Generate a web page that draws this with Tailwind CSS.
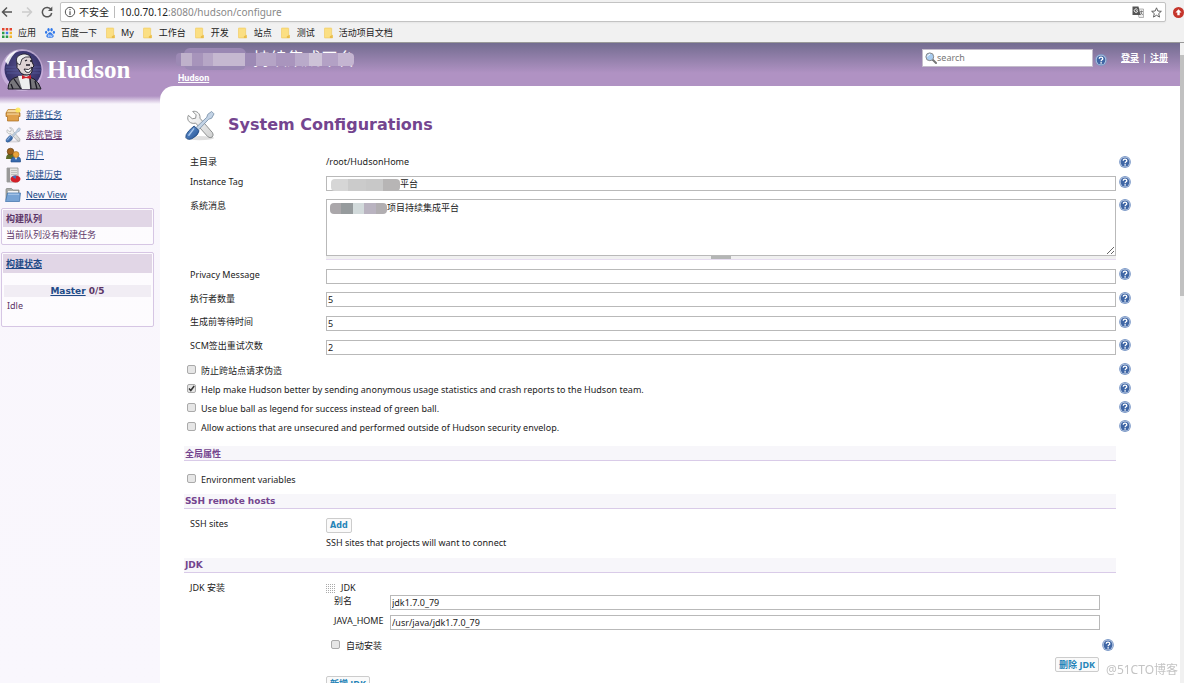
<!DOCTYPE html>
<html lang="en">
<head>
<meta charset="utf-8">
<title>System Configurations [Hudson]</title>
<script src="https://cdn.jsdelivr.net/npm/@tailwindcss/browser@4"></script>
</head>
<body class="flex h-screen flex-col overflow-hidden bg-white font-['Noto_Sans','Noto_Sans_CJK_SC',sans-serif] text-[9px] leading-3 text-[#222]">

<!-- Shared icons -->
<svg class="absolute size-0" aria-hidden="true">
  <defs>
    <radialGradient id="globe" cx="50%" cy="45%" r="60%"><stop offset="0" stop-color="#5a5590"/><stop offset="1" stop-color="#2f2b62"/></radialGradient>
    <linearGradient id="blade" x1="0" y1="0" x2="1" y2="1"><stop offset="0" stop-color="#fff"/><stop offset="1" stop-color="#cfd0d0"/></linearGradient>
    <linearGradient id="grip" x1="0" y1="0" x2="1" y2="1"><stop offset="0" stop-color="#6c9bd4"/><stop offset="1" stop-color="#1f4f94"/></linearGradient>
  </defs>
  <symbol id="help" viewBox="0 0 12 12">
    <circle cx="6" cy="6" r="5.9" fill="#7d9ac8"/><circle cx="6" cy="6" r="5" fill="#dfe7f3"/><circle cx="6" cy="6" r="4.500" fill="#3f66a5"/>
    <path d="M4.2 4.7C4.2 2.6 7.8 2.6 7.8 4.7C7.8 5.9 6.1 5.8 6.1 7.2" fill="none" stroke="#fff" stroke-width="1.3"/><circle cx="6.1" cy="8.9" r=".8" fill="#fff"/>
  </symbol>
  <symbol id="folder" viewBox="0 0 10 12">
    <path d="M.5 1Q.5.5 1 .5H8Q8.500.5 8.500 1V8.500H9.500V11.500H1Q.5 11.500.5 11Z" fill="#fbdf83" stroke="#f0c95c" stroke-width=".7"/><path d="M6.500 11.500V9.500L8.500 8.500H9.500V11.500Z" fill="#e9bd4b"/>
  </symbol>
  <symbol id="tools" viewBox="0 0 32 32">
    <ellipse cx="16" cy="29" rx="15" ry="2.200" fill="#000" opacity=".13"/>
    <path d="M4.500 5.500L8.500 9L12 8.500L12.500 5L9 1.500C13 .5 17 3.500 16.500 8.500L29.500 23.500Q31 26 29 28Q27 29.500 24.500 27.500L12 13.500C7 15 2 11 4.500 5.500Z" fill="url(#blade)" stroke="#8c8e8e"/>
    <path d="M12.500 18L23.500 7.500L24.500 4.500L28.500 1.500L31 4L28.500 8.500L25.500 9.500L15 20.500Z" fill="#c3d3e5" stroke="#7d93ab" stroke-width=".9"/>
    <path d="M10.500 16.500L15.500 21.500Q15 26 8.500 29.500Q4 31.500 2 28.500Q1 26 5 21.500Q8.500 18 10.500 16.500Z" fill="url(#grip)" stroke="#1e477f" stroke-width=".9"/>
    <path d="M10 19.500L5 26" stroke="#a9c7ee" stroke-width="1.500" stroke-linecap="round"/>
  </symbol>
</svg>

<!-- Browser toolbar -->
<div class="flex h-6 shrink-0 items-center bg-[#f1f1f1]">
  <div class="flex w-[60px] shrink-0 items-center gap-2 pl-px">
    <button type="button" aria-label="Back"><svg class="size-3" viewBox="0 0 12 12" fill="none" stroke="#555" stroke-width="1.500"><path d="M11 6H1.500M6 1.500L1.500 6L6 10.500"/></svg></button>
    <button type="button" aria-label="Forward"><svg class="size-3" viewBox="0 0 12 12" fill="none" stroke="#ccc" stroke-width="1.500"><path d="M1 6H10.500M6 1.500L10.500 6L6 10.500"/></svg></button>
    <button type="button" aria-label="Reload"><svg class="size-3" viewBox="0 0 12 12" fill="none" stroke="#555" stroke-width="1.500"><path d="M10 3.500A4.700 4.700 0 1 0 10.700 7"/><path d="M11.300.5V5H7Z" fill="#555" stroke="none"/></svg></button>
  </div>
  <div class="flex h-5 grow items-center rounded-xs border border-[#c3c3c3] bg-white pl-[3px] text-[10px] shadow-xs">
    <svg class="size-3 shrink-0" viewBox="0 0 12 12" fill="none" stroke="#555"><circle cx="6" cy="6" r="4.700"/><path d="M6 5.200V9M6 3V4.300" stroke-width="1.200"/></svg>
    <span class="ml-[3px] shrink-0 text-[#222]">不安全</span>
    <span class="mx-[5px] h-3 w-px bg-[#bbb]"></span>
    <div role="textbox" aria-label="Address" contenteditable="true" class="grow text-[#888] outline-none"><span class="text-[#222]">10.0.70.12</span>:8080/hudson/configure</div>
    <button type="button" aria-label="Translate" class="mr-[7px]"><svg class="size-3" viewBox="0 0 12 12"><path d="M5 3H11.500V11.500H7Z" fill="#eee" stroke="#999" stroke-width=".7"/><path d="M.5.5H6.500L8.500 9H.5Z" fill="#555"/><path d="M5.500 3.500A1.800 1.800 0 1 0 5.500 5.800V4.800H4" fill="none" stroke="#fff" stroke-width=".9"/><path d="M8 5.500H11M9.500 4.500V5.500Q9.500 8 8.300 9M8.800 6.500L10.800 9" stroke="#666" stroke-width=".7" fill="none"/></svg></button>
    <button type="button" aria-label="Bookmark" class="mr-[3px]"><svg class="size-[11px]" viewBox="0 0 12 12" fill="none" stroke="#555"><path d="M6 .9L7.500 4.400L11.300 4.700L8.400 7.200L9.300 11L6 9L2.700 11L3.600 7.200L.7 4.700L4.500 4.400Z"/></svg></button>
  </div>
  <button type="button" aria-label="Extension" class="ml-[7px] w-[11px] shrink-0"><svg class="size-[11px]" viewBox="0 0 12 12"><circle cx="6" cy="6" r="6" fill="#c5352b"/><path d="M6 2.500L9.300 6H7.300V9H4.700V6H2.700Z" fill="#fff"/></svg></button>
</div>

<!-- Bookmarks -->
<nav class="flex h-[19px] shrink-0 items-center gap-[9px] border-b border-[#999] bg-[#f1f1f1] pl-[2px] whitespace-nowrap">
  <a href="#" class="flex items-center gap-[6px]"><svg class="size-[10px]" viewBox="0 0 10 10"><path d="M0 0H2.500V2.500H0ZM3.750 0H6.250V2.500H3.750ZM7.500 0H10V2.500H7.500Z" fill="#e2452f"/><path d="M0 3.750H2.500V6.250H0Z" fill="#2c9b48"/><path d="M3.750 3.750H6.250V6.250H3.750Z" fill="#3c79e6"/><path d="M7.500 3.750H10V6.250H7.500Z" fill="#f2b52c"/><path d="M0 7.500H2.500V10H0ZM3.750 7.500H6.250V10H3.750Z" fill="#2c9b48"/><path d="M7.500 7.500H10V10H7.500Z" fill="#f2b52c"/></svg>应用</a>
  <a href="#" class="flex items-center gap-[6px]"><svg class="size-[10px]" viewBox="0 0 10 10" fill="#2e77ea"><ellipse cx="3.500" cy="1.800" rx="1.200" ry="1.700"/><ellipse cx="6.600" cy="1.800" rx="1.200" ry="1.700"/><ellipse cx="1.100" cy="4.200" rx="1.100" ry="1.500"/><ellipse cx="8.900" cy="4.200" rx="1.100" ry="1.500"/><path d="M5 4.200Q6 4.200 7 5.600Q9.200 7.200 8.600 8.700Q8 10 5 9.700Q2 10 1.400 8.700Q.8 7.200 3 5.600Q4 4.200 5 4.200Z"/><path d="M3.200 6.800H4.300V8.600H3.200ZM5.600 6.600V8.600H7V6.600" fill="none" stroke="#fff" stroke-width=".6"/></svg>百度一下</a>
  <a href="#" class="flex items-center gap-[6px]"><svg class="h-3 w-[9px]"><use href="#folder"/></svg>My</a>
  <a href="#" class="flex items-center gap-[7px]"><svg class="h-3 w-[9px]"><use href="#folder"/></svg>工作台</a>
  <a href="#" class="flex items-center gap-[7px]"><svg class="h-3 w-[9px]"><use href="#folder"/></svg>开发</a>
  <a href="#" class="flex items-center gap-[7px]"><svg class="h-3 w-[9px]"><use href="#folder"/></svg>站点</a>
  <a href="#" class="flex items-center gap-[7px]"><svg class="h-3 w-[9px]"><use href="#folder"/></svg>测试</a>
  <a href="#" class="flex items-center gap-[6px]"><svg class="h-3 w-[9px]"><use href="#folder"/></svg>活动项目文档</a>
</nav>

<div class="flex min-h-0 grow">
  <div class="flex min-w-0 grow bg-linear-to-b from-[#736c90] from-0% via-[#b092c3] via-[30px] to-[#b092c3]">

    <!-- Sidebar -->
    <aside class="flex w-[160px] shrink-0 flex-col">
      <div class="flex h-[53px] shrink-0 items-center gap-1 pl-px">
        <svg class="h-11 w-[42px]" viewBox="0 0 42 44">
          <circle cx="21" cy="22" r="21" fill="#dcc8ec" opacity=".55"/><circle cx="21" cy="22" r="19.500" fill="#c7aede"/><circle cx="22" cy="21.500" r="18.500" fill="url(#globe)"/>
          <path d="M5 19H40M5 22H40M6 25H39" stroke="#5d64a8" opacity=".6"/>
          <path d="M4 13Q8 4 17 2Q10 8 7 17Z" fill="#fff" opacity=".85"/>
          <path d="M7 41Q7 31 16 29L24 27L33 31Q38 34 40 41Z" fill="#77767b" stroke="#1c1a26"/>
          <path d="M17 28L28 27L29 41H21Z" fill="#eee"/><path d="M13 31L20 41M29 30L30 41M34 33L36 41M10 36L12 41" stroke="#1c1a26" stroke-width="1.300"/>
          <path d="M17 11Q18 6 25 7Q31 8 31 14L33 18L31 20Q32 27 26 27Q20 27 18 22Q15 20 16 16Z" fill="#ddd3d5" stroke="#1c1a26"/>
          <path d="M16 15Q14 9 19 7Q25 4 30 9Q24 8 21 11L19 17Z" fill="#eee" stroke="#1c1a26" stroke-width=".8"/>
          <path d="M23 21Q28 23 31 19Q30 26 25 24Z" fill="#fff" stroke="#1c1a26" stroke-width=".9"/><path d="M24 13L26 12M29 13L31 13M25 17L29 17" stroke="#1c1a26" stroke-width="1.300"/>
          <path d="M21 27L25 29L30 27V31L25 30L21 31Z" fill="#d0202c"/>
        </svg>
        <span class="font-['Liberation_Serif',serif] text-[25px] leading-7 font-bold text-white">Hudson</span>
      </div>
      <div class="flex grow flex-col bg-linear-to-b from-[#b092c3] via-[#f9f6fc] via-[8px] to-[#f9f7fd] px-px text-[#5c3566]">
        <nav class="mt-[9px] flex flex-col text-[#204a87]">
          <a href="#" class="flex h-5 items-center gap-[5px] pl-1 underline"><svg class="size-4" viewBox="0 0 16 16"><path d="M1 6L3 2.500H12L15 6Z" fill="#f6d79c" stroke="#b97d28" stroke-width=".7"/><path d="M1 6H15V9.500H13.500V14H2.500V9.500H1Z" fill="#e0a04a" stroke="#a76a1c" stroke-width=".7"/><path d="M2 7H14" stroke="#fae3b5"/><circle cx="13" cy="3" r="2.600" fill="#ffe95c" opacity=".9"/></svg>新建任务</a>
          <a href="#" class="flex h-5 items-center gap-[5px] pl-1 text-[#5c2f6b] underline"><svg class="size-4"><use href="#tools"/></svg>系统管理</a>
          <a href="#" class="flex h-5 items-center gap-[5px] pl-1 underline"><svg class="size-4" viewBox="0 0 16 16"><path d="M1 12Q1 6.500 5.500 6.500T10 12Z" fill="#5e6b28"/><circle cx="5.500" cy="4.500" r="3.300" fill="#a0621c" stroke="#60390f" stroke-width=".6"/><path d="M6 15Q5.500 9.500 11 9.500T15.500 15Z" fill="#376aad" stroke="#204a87" stroke-width=".6"/><path d="M9.500 9.500L11 13L12.500 9.500Z" fill="#fff"/><circle cx="11" cy="7.500" r="3" fill="#eaa43b" stroke="#a5691b" stroke-width=".6"/></svg>用户</a>
          <a href="#" class="flex h-5 items-center gap-[5px] pl-1 underline"><svg class="size-4" viewBox="0 0 16 16"><path d="M2 1H13V15H2Z" fill="#e4e4e2" stroke="#969894" stroke-width=".8"/><path d="M2 1H5V15H2Z" fill="#999"/><path d="M6 3.500H12M6 5.500H12M6 7.500H12" stroke="#b5b7b4" stroke-width=".8"/><ellipse cx="10.500" cy="12" rx="5" ry="3.500" fill="#d3202a"/><path d="M10.500 12L7 9.500Q9 8.200 11.500 8.600Z" fill="#3e70bb"/></svg>构建历史</a>
          <a href="#" class="flex h-5 items-center gap-[5px] pl-1 underline"><svg class="size-4" viewBox="0 0 16 16"><path d="M1 13V2.500Q1 1.500 2 1.500H6.500L8 3H14V13Z" fill="#a9aba8" stroke="#7d807c" stroke-width=".7"/><path d="M3 4H13V8H3Z" fill="#f5f5f5"/><path d="M.5 14.500L2.500 6H15.500L14.500 14.500Z" fill="#77a3d4" stroke="#3b6ea8" stroke-width=".7"/><path d="M3 7.200H14" stroke="#b4d0ee"/></svg>New View</a>
        </nav>
        <section class="mt-[3px] mr-[5px] rounded-xs border border-[#d6c6e4] bg-white/60 p-px">
          <h2 class="h-[17px] bg-[#e1d6e6] pt-[3px] pl-[3px] font-bold">构建队列</h2>
          <p class="h-4 pt-[2px] pl-[3px]">当前队列没有构建任务</p>
        </section>
        <section class="mt-[7px] mr-[5px] h-[75px] rounded-xs border border-[#d6c6e4] bg-white/60 p-px">
          <h2 class="h-[19px] bg-[#e1d6e6] pt-[4px] pl-[3px] font-bold"><a href="#" class="text-[#204a87] underline">构建状态</a></h2>
          <p class="mx-px mt-3 h-[12px] bg-[#f1edf4] text-center font-['DejaVu_Sans'] font-bold"><a href="#" class="text-[#204a87] underline">Master</a> 0/5</p>
          <p class="mt-[3px] pl-1">Idle</p>
        </section>
      </div>
    </aside>

    <div class="flex min-w-0 grow flex-col">
      <!-- Page header -->
      <header class="flex h-[43px] shrink-0 items-start pr-3 text-white">
        <div class="relative grow pl-[18px]">
          <h1 class="mt-[6px] h-5 pl-[75px] text-[17px] leading-5 font-normal">持续集成平台</h1>
          <!-- Pixelated patch over the private part of the title -->
          <div class="absolute top-[5px] left-[24px] h-[22px] w-[62px] rounded-md bg-[#9a88b3]"></div>
          <div class="absolute top-[10px] left-4 flex h-[13px] w-[178px] overflow-hidden rounded-sm">
            <span class="w-[3%] bg-[#9c89b4]"></span><span class="w-[6%] bg-[#bfb1cb]"></span><span class="w-[6%] bg-[#a794bb]"></span><span class="w-[6%] bg-[#b6a6c6]"></span><span class="w-[18%] bg-[#c5b8d0]"></span><span class="w-[6%] bg-[#9d8ab5]"></span><span class="w-[11%] bg-[#b5a4c6]"></span><span class="w-[11%] bg-[#a995bd]"></span><span class="w-[8%] bg-[#b9aaca]"></span><span class="w-[7%] bg-[#cdc2d7]"></span><span class="w-[9%] bg-[#b3a1c5]"></span><span class="w-[9%] bg-[#c4b5d1]"></span>
          </div>
          <a href="#" class="mt-[3px] inline-block font-['Roboto'] leading-3 font-bold underline">Hudson</a>
        </div>
        <div class="mt-[6px] flex h-[18px] w-[171px] items-center border border-[#c4bccb] bg-white pl-[2px]">
          <svg class="size-3 shrink-0" viewBox="0 0 12 12"><path d="M7.500 7.500L11 11" stroke="#777" stroke-width="2" stroke-linecap="round"/><circle cx="4.800" cy="4.800" r="3.900" fill="#a9cdf0" stroke="#888"/><path d="M2.500 4.500Q3 2.500 5 2.300" stroke="#fff" fill="none"/></svg>
          <input type="text" aria-label="Search" placeholder="search" class="w-full min-w-0 text-[9px] leading-3 text-[#555] outline-none placeholder:text-[#777]">
        </div>
        <button type="button" aria-label="Help" class="mt-[11px] ml-[2px] size-3"><svg class="size-3"><use href="#help"/></svg></button>
        <div class="mt-[9px] ml-[14px] flex gap-[3px] font-bold"><a href="#" class="underline">登录</a><span class="font-normal">|</span><a href="#" class="underline">注册</a></div>
      </header>

      <!-- Configuration form -->
      <main class="min-h-0 grow overflow-hidden rounded-tl-[14px] bg-white pl-6">
        <form class="pr-[47px]">
          <div class="flex h-[66px] items-start gap-[13px] pt-[24px]">
            <svg class="size-[31px]"><use href="#tools"/></svg>
            <h1 class="mt-[3px] font-['DejaVu_Sans'] text-[16px] leading-6 font-bold text-[#74458f]">System Configurations</h1>
          </div>

          <div class="grid grid-cols-[136px_1fr_17px] pl-[6px]">
            <span class="h-5 pt-[4px]">主目录</span><span class="pt-[4px]">/root/HudsonHome</span><button type="button" aria-label="Help" class="mt-1 ml-[3px] size-3"><svg class="size-3"><use href="#help"/></svg></button>

            <label for="tag" class="h-6 pt-[4px]">Instance Tag</label>
            <div class="relative pt-[4px]"><input id="tag" type="text" value="平台" class="block h-[15px] w-full border border-[#b9b9b9] pl-[73px]">
              <div class="absolute top-[7px] left-[5px] flex h-3 w-[69px] overflow-hidden rounded-sm"><span class="w-1/4 bg-[#d6d6d6]"></span><span class="w-1/4 bg-[#cbcbcb]"></span><span class="w-1/4 bg-[#c8c8c8]"></span><span class="w-1/4 bg-[#b7b5b5]"></span></div></div>
            <button type="button" aria-label="Help" class="mt-1 ml-[3px] size-3"><svg class="size-3"><use href="#help"/></svg></button>

            <label for="msg" class="h-[69px] pt-[4px]">系统消息</label>
            <div class="relative pt-[3px]"><textarea id="msg" class="block h-[57px] w-full resize-y border border-[#b9b9b9] pt-[2px] pl-[60px]">项目持续集成平台</textarea>
              <div class="absolute top-[7px] left-[4px] flex h-[11px] w-[57px] overflow-hidden rounded-sm"><span class="w-1/5 bg-[#aaa7aa]"></span><span class="w-1/5 bg-[#969b9d]"></span><span class="w-1/5 bg-[#d2dadb]"></span><span class="w-1/5 bg-[#b9b3c0]"></span><span class="w-1/5 bg-[#b1aeb1]"></span></div>
              <div class="flex h-1 justify-center border-b border-[#e6dcf0] bg-[#f0f0f0]"><span class="h-[3px] w-5 bg-[#b4b6b5]"></span></div></div>
            <button type="button" aria-label="Help" class="mt-[3px] ml-[3px] size-3"><svg class="size-3"><use href="#help"/></svg></button>

            <label for="privacy" class="h-6 pt-[4px]">Privacy Message</label><div class="pt-[4px]"><input id="privacy" type="text" class="block h-[15px] w-full border border-[#b9b9b9] pl-px"></div><button type="button" aria-label="Help" class="mt-[3px] ml-[3px] size-3"><svg class="size-3"><use href="#help"/></svg></button>
            <label for="exec" class="h-6 pt-[4px]">执行者数量</label><div class="pt-[3px]"><input id="exec" type="text" value="5" class="block h-[15px] w-full border border-[#b9b9b9] pl-px"></div><button type="button" aria-label="Help" class="mt-[3px] ml-[3px] size-3"><svg class="size-3"><use href="#help"/></svg></button>
            <label for="quiet" class="h-6 pt-[3px]">生成前等待时间</label><div class="pt-[3px]"><input id="quiet" type="text" value="5" class="block h-[15px] w-full border border-[#b9b9b9] pl-px"></div><button type="button" aria-label="Help" class="mt-[3px] ml-[3px] size-3"><svg class="size-3"><use href="#help"/></svg></button>
            <label for="retry" class="h-6 pt-[3px]">SCM签出重试次数</label><div class="pt-[3px]"><input id="retry" type="text" value="2" class="block h-[15px] w-full border border-[#b9b9b9] pl-px"></div><button type="button" aria-label="Help" class="mt-[2px] ml-[3px] size-3"><svg class="size-3"><use href="#help"/></svg></button>
          </div>

          <div class="pl-[3px]">
            <div class="flex h-[19px] items-center"><input id="c1" type="checkbox" class="mb-[3px] size-[9px] appearance-none rounded-[2px] border border-[#aaa] bg-[#e6e6e6]"><label for="c1" class="grow pl-[5px]">防止跨站点请求伪造</label><button type="button" aria-label="Help" class="mb-[3px] mr-[2px] size-3"><svg class="size-3"><use href="#help"/></svg></button></div>
            <div class="flex h-[19px] items-center"><span class="relative mb-[3px] flex size-[9px]"><input id="c2" type="checkbox" checked class="size-[9px] appearance-none rounded-[2px] border border-[#aaa] bg-[#e6e6e6]"><svg class="pointer-events-none absolute inset-0 size-[9px]" viewBox="0 0 9 9"><path d="M2 4.500L3.800 6.500L7.200 2" fill="none" stroke="#333" stroke-width="1.500"/></svg></span><label for="c2" class="grow pl-[5px]">Help make Hudson better by sending anonymous usage statistics and crash reports to the Hudson team.</label><button type="button" aria-label="Help" class="mb-[3px] mr-[2px] size-3"><svg class="size-3"><use href="#help"/></svg></button></div>
            <div class="flex h-[19px] items-center"><input id="c3" type="checkbox" class="mb-[3px] size-[9px] appearance-none rounded-[2px] border border-[#aaa] bg-[#e6e6e6]"><label for="c3" class="grow pl-[5px]">Use blue ball as legend for success instead of green ball.</label><button type="button" aria-label="Help" class="mb-[3px] mr-[2px] size-3"><svg class="size-3"><use href="#help"/></svg></button></div>
            <div class="flex h-[19px] items-center"><input id="c4" type="checkbox" class="mb-[3px] size-[9px] appearance-none rounded-[2px] border border-[#aaa] bg-[#e6e6e6]"><label for="c4" class="grow pl-[5px]">Allow actions that are unsecured and performed outside of Hudson security envelop.</label><button type="button" aria-label="Help" class="mb-[3px] mr-[2px] size-3"><svg class="size-3"><use href="#help"/></svg></button></div>
          </div>

          <div class="pr-[17px]">
            <h2 class="mt-[9px] h-[15px] border-b border-[#d9cbe8] bg-[#f7f6fa] pt-[2px] pl-px font-['DejaVu_Sans','Noto_Sans_CJK_SC'] font-bold text-[#74458f]">全局属性</h2>
            <div class="mt-[9px] flex h-[19px] items-center pl-[3px]"><input id="c5" type="checkbox" class="mb-[3px] size-[9px] appearance-none rounded-[2px] border border-[#aaa] bg-[#e6e6e6]"><label for="c5" class="pl-[5px]">Environment variables</label></div>
            <h2 class="mt-[5px] h-[15px] border-b border-[#d9cbe8] bg-[#f7f6fa] pt-px pl-px font-['DejaVu_Sans'] font-bold text-[#74458f]">SSH remote hosts</h2>
            <div class="mt-[9px] grid h-10 grid-cols-[136px_1fr] pl-[6px]">
              <span>SSH sites</span>
              <div><button type="button" class="block h-[15px] rounded-[2px] border border-[#ccc] bg-[#fafafa] px-[3px] font-['DejaVu_Sans'] text-[8px] font-bold text-[#2584b8]">Add</button><p class="mt-1">SSH sites that projects will want to connect</p></div>
            </div>
            <h2 class="h-[15px] border-b border-[#d9cbe8] bg-[#f7f6fa] pt-px pl-px font-['DejaVu_Sans'] font-bold text-[#74458f]">JDK</h2>
          </div>

          <div class="mt-[9px] grid grid-cols-[136px_1fr] pl-[6px]">
            <span>JDK 安装</span>
            <div>
              <div class="flex items-center gap-[6px]"><svg class="size-[9px]" viewBox="0 0 9 9"><path d="M.5 0V9M2.500 0V9M4.500 0V9M6.500 0V9M8.500 0V9" stroke="#aaa" stroke-dasharray="1 1"/></svg>JDK</div>
              <div class="grid grid-cols-[56px_1fr] pr-[33px] pl-2">
                <label for="name" class="pt-px">别名</label><div class="h-5 pt-px"><input id="name" type="text" value="jdk1.7.0_79" class="block h-[15px] w-full border border-[#b9b9b9] pl-px"></div>
                <label for="home" class="pt-px whitespace-nowrap">JAVA_HOME</label><div class="h-[21px] pt-px"><input id="home" type="text" value="/usr/java/jdk1.7.0_79" class="block h-[15px] w-full border border-[#b9b9b9] pl-px"></div>
              </div>
              <div class="flex h-[22px] items-center pr-[19px] pl-[5px]"><input id="auto" type="checkbox" class="mb-[3px] size-[9px] appearance-none rounded-[2px] border border-[#aaa] bg-[#e6e6e6]"><label for="auto" class="grow pl-[6px]">自动安装</label><button type="button" aria-label="Help" class="mb-[3px] size-3"><svg class="size-3"><use href="#help"/></svg></button></div>
              <div class="flex justify-end pr-[34px]"><button type="button" class="h-[15px] rounded-[2px] border border-[#ccc] bg-[#fafafa] px-[3px] leading-3 font-bold text-[#2584b8]">删除 JDK</button></div>
              <button type="button" class="mt-1 h-[15px] rounded-[2px] border border-[#ccc] bg-[#fafafa] px-[3px] leading-3 font-bold text-[#2584b8]">新增 JDK</button>
            </div>
          </div>
        </form>
      </main>
    </div>
  </div>

  <!-- Scrollbar -->
  <div class="w-1 shrink-0 bg-[#f1f1f1] pt-3"><div class="h-[241px] bg-[#c1c1c1]"></div></div>
</div>

<span class="fixed right-[6px] bottom-[5px] text-[12px] leading-4 text-[#c4c4c4]">@51CTO博客</span>
</body>
</html>
